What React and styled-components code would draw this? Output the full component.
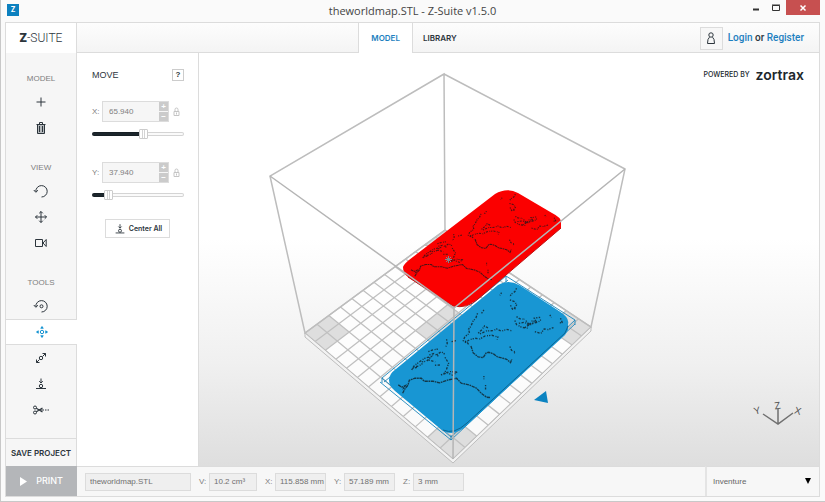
import React, { useState } from 'react';
import styled, { createGlobalStyle } from 'styled-components';

const line = '#dcdcdc';
const ink = '#2c353c';
const muted = '#808080';
const blue = '#1d7fc0';
const sans = '"Liberation Sans", Arial, sans-serif';
const display = 'Inter, "Liberation Sans", sans-serif';

const GlobalStyle = createGlobalStyle`
  * {
    box-sizing: border-box;
  }
  body {
    margin: 0;
    background: #fafafa;
    color: ${ink};
    font: 8px/12px ${sans};
  }
  button, input, select {
    font: inherit;
    color: inherit;
    margin: 0;
  }
  button {
    padding: 0;
    border: none;
    background: none;
    cursor: pointer;
  }
  a {
    color: inherit;
    text-decoration: none;
  }
`;

const Window = styled.div`
  display: flex;
  flex-direction: column;
  min-height: 100vh;
  padding: 0 5px 4px 4px;
  border-left: 1px solid #c8c8c8;
  border-bottom: 1px solid #c8c8c8;
`;

const TitleBar = styled.div`
  display: grid;
  grid-template-columns: 1fr auto 1fr;
  height: 22px;
`;

const AppIcon = styled.div`
  width: 12px;
  height: 12px;
  margin: 4px 0 0 2px;
  background: #0b80bf;
  color: white;
  font: bold 7px/12px ${display};
  text-align: center;
`;

const WindowTitle = styled.h1`
  margin: 0;
  color: #444;
  font: 11px/22px "Open Sans", sans-serif;
`;

const WindowButtons = styled.div`
  display: flex;
  justify-content: flex-end;
  align-items: flex-start;
`;

const WindowButton = styled.button`
  display: flex;
  align-items: center;
  justify-content: center;
  width: ${({ $close }) => ($close ? 34 : 20)}px;
  height: 15px;
  background: ${({ $close }) => ($close ? '#c75050' : 'none')};
  color: ${({ $close }) => ($close ? 'white' : '#333')};
`;

const Frame = styled.div`
  display: flex;
  flex-direction: column;
  flex: 1;
  border: 1px solid ${line};
`;

const Header = styled.header`
  display: grid;
  grid-template-columns: 1fr auto 1fr;
  height: 30px;
  border-bottom: 1px solid ${line};
  background: linear-gradient(#fdfdfd, #f4f4f4);
`;

const Logo = styled.div`
  width: 71px;
  border-right: 1px solid ${line};
  background: white;
  font: 300 12px/30px Roboto, sans-serif;
  text-align: center;
  b {
    font-weight: 900;
  }
`;

const Tabs = styled.nav`
  display: flex;
`;

const Tab = styled.a`
  height: ${({ $active }) => ($active ? 30 : 29)}px;
  padding: 0 ${({ $active }) => ($active ? 12 : 10)}px;
  border: solid ${line};
  border-width: 0 ${({ $active }) => ($active ? '1px' : 0)};
  background: ${({ $active }) => ($active ? 'white' : 'none')};
  color: ${({ $active }) => ($active ? blue : ink)};
  font: 600 8px/30px ${display};
`;

const Account = styled.div`
  display: flex;
  align-items: center;
  justify-content: flex-end;
  gap: 5px;
  padding-right: 15px;
  font: 500 10px/22px Roboto, sans-serif;
  a {
    color: ${blue};
  }
`;

const Avatar = styled.button`
  display: flex;
  align-items: center;
  justify-content: center;
  width: 23px;
  height: 23px;
  border: 1px solid ${line};
  background: #f7f7f7;
`;

const Body = styled.div`
  display: flex;
  flex: 1;
`;

const Sidebar = styled.aside`
  display: flex;
  flex-direction: column;
  width: 71px;
  padding-top: 14px;
  border-right: 1px solid ${line};
  background: #f6f6f6;
`;

const ToolGroup = styled.section`
  margin-bottom: 15px;
`;

const GroupLabel = styled.h2`
  height: 22px;
  margin: 0;
  color: ${muted};
  font: 8px/24px ${sans};
  text-align: center;
`;

const ToolButton = styled.button`
  display: flex;
  align-items: center;
  justify-content: center;
  width: ${({ $active }) => ($active ? 71 : 70)}px;
  height: 26px;
  border: solid ${line};
  border-width: ${({ $active }) => ($active ? '1px 0' : 0)};
  background: ${({ $active }) => ($active ? 'white' : 'none')};
  color: ${({ $active }) => ($active ? '#1794d2' : ink)};
`;

const SaveButton = styled.button`
  height: 28px;
  margin-top: auto;
  border-top: 1px solid ${line};
  font: 600 8px/26px ${display};
`;

const Panel = styled.section`
  width: 122px;
  padding: 15px 14px 0 15px;
  border-right: 1px solid ${line};
  background: white;
`;

const PanelHead = styled.div`
  display: flex;
  align-items: center;
  justify-content: space-between;
  margin-bottom: 19px;
  h2 {
    margin: 0;
    font: 9px/14px ${sans};
  }
`;

const HelpButton = styled.button`
  width: 12px;
  height: 12px;
  border: 1px solid #ccc;
  font: bold 8px/10px ${sans};
`;

const Axis = styled.div`
  height: 61px;
`;

const AxisRow = styled.div`
  display: flex;
  align-items: center;
  color: ${muted};
  label {
    width: 10px;
  }
`;

const NumberBox = styled.div`
  display: flex;
  width: 67px;
  height: 21px;
  margin-right: 4px;
  border: 1px solid ${line};
  background: #f6f6f6;
  input {
    flex: 1;
    min-width: 0;
    padding: 1px 0 0 6px;
    border: none;
    background: none;
  }
`;

const Steps = styled.div`
  display: flex;
  flex-direction: column;
  gap: 1px;
  button {
    flex: 1;
    width: 9px;
    background: #cbcbcb;
    color: white;
    font: bold 8px/8px ${sans};
  }
`;

const Slider = styled.input`
  display: block;
  appearance: none;
  width: 92px;
  height: 10px;
  margin: 7px 0 0;
  background: none;
  &::-webkit-slider-runnable-track {
    height: 4px;
    border: 1px solid rgba(0, 0, 0, 0.15);
    border-radius: 2px;
    background: linear-gradient(90deg, #1c262c ${({ value }) => value}%, #fafafa 0) border-box;
  }
  &::-webkit-slider-thumb {
    appearance: none;
    width: 9px;
    height: 10px;
    margin-top: -4px;
    border: 1px solid #ccc;
    border-radius: 1px;
    background: linear-gradient(90deg, white 2px, #d4d4d4 2px 3px, white 3px 4px, #d4d4d4 4px 5px, white 5px) center;
  }
`;

const CenterButton = styled.button`
  display: flex;
  align-items: center;
  justify-content: center;
  gap: 2px;
  width: 65px;
  height: 19px;
  margin: -4px 0 0 13px;
  border: 1px solid ${line};
  font: 600 7px/16px ${display};
`;

const Viewport = styled.main`
  position: relative;
  flex: 1;
  min-width: 0;
  background: linear-gradient(white 45%, #f0f0f0 75%, #dedede);
  > svg {
    display: block;
    width: 100%;
    height: 100%;
  }
`;

const Powered = styled.div`
  position: absolute;
  top: 11px;
  right: 15px;
  display: flex;
  align-items: center;
  gap: 6px;
  color: #20272c;
  font: 500 7px/22px ${display};
  strong {
    font: 600 14px/18px ${display};
  }
`;

const Footer = styled.footer`
  display: flex;
  height: 30px;
  background: #f7f7f7;
`;

const PrintButton = styled.button`
  display: flex;
  align-items: center;
  justify-content: center;
  gap: 9px;
  width: 71px;
  background: #b4b6b9;
  color: white;
  font: 500 9px/30px ${display};
`;

const Stats = styled.div`
  display: flex;
  align-items: center;
  flex: 1;
  gap: 8px;
  padding-left: 8px;
  border-top: 1px solid ${line};
  color: ${muted};
`;

const Stat = styled.label`
  display: flex;
  align-items: center;
  span {
    width: 10px;
  }
  input {
    width: ${({ $size }) => $size}px;
    height: 18px;
    padding: 0 0 0 4px;
    border: 1px solid ${line};
    background: #efefef;
    color: #707070;
  }
`;

const Material = styled.div`
  position: relative;
  width: 114px;
  border-top: 1px solid ${line};
  border-left: 2px solid #e4e4e4;
  select {
    appearance: none;
    width: 100%;
    height: 100%;
    padding: 0 6px;
    border: none;
    background: none;
    color: #666;
  }
  svg {
    position: absolute;
    top: 11px;
    right: 8px;
    pointer-events: none;
  }
`;

const Icon = ({ children, size = 16, width = 1 }) => (
  <svg
    width={size}
    height={size}
    viewBox="0 0 16 16"
    fill="none"
    stroke="currentColor"
    strokeWidth={width}
    aria-hidden="true"
  >
    {children}
  </svg>
);

const icons = {
  add: <path d="M8 3.500v9M3.500 8h9" />,
  remove: (
    <>
      <path d="M3.500 4.500h9M6.500 4V2.500h3V4" />
      <path d="M4.500 5v8.500h7V5" fill="#b4b8bb" />
      <path d="M6.500 6v6M9.500 6v6" />
    </>
  ),
  rotate: <path d="M2.800 8.500A5.700 5.700 0 1 1 8.500 14M.8 7l2 2.300L5 7.200" />,
  pan: <path d="M8 2.500v11M2.500 8h11M6.200 4.300L8 2.500l1.800 1.800M6.200 11.700L8 13.500l1.800-1.800M4.300 6.200L2.500 8l1.800 1.800M11.700 6.200L13.500 8l-1.800 1.800" />,
  camera: <path d="M2.500 4.500h7v7h-7zM10 8l3.200-3.500v7z" />,
  turn: (
    <>
      <path d="M2.800 8.500A5.700 5.700 0 1 1 8.500 14M.8 7l2 2.300L5 7.200" />
      <circle cx="8.500" cy="8.300" r="1.500" />
    </>
  ),
  move: (
    <>
      <circle cx="8" cy="8" r="1.700" />
      <path d="M8 2.500V5M8 11v2.500M2.500 8H5M11 8h2.500" />
      <path d="M6 4.500L8 2.200l2 2.300zM6 11.500l2 2.300 2-2.300zM4.500 6L2.200 8l2.300 2zM11.500 6l2.300 2-2.300 2z" fill="currentColor" stroke="none" />
    </>
  ),
  scale: (
    <>
      <circle cx="8" cy="8" r="1.700" />
      <path d="M9.500 6.500L12.500 3.500M9.500 3.500h3v3M6.500 9.500L3.500 12.500M3.500 9.500v3h3" />
    </>
  ),
  drop: (
    <>
      <path d="M3 12.500h10M8 2.500V7M6.200 5.200L8 7l1.800-1.800" />
      <circle cx="8" cy="10" r="1.700" />
    </>
  ),
  cut: (
    <>
      <circle cx="2" cy="5.500" r="1.500" />
      <circle cx="2" cy="10.500" r="1.500" />
      <path d="M3.300 6.200L9.500 10M3.300 9.800L9.500 6" strokeWidth="1.300" />
      <path d="M7 8h9" strokeDasharray="4 1 1.500 1" />
    </>
  ),
};

const LockIcon = () => (
  <svg width="8" height="10" viewBox="0 0 8 10" fill="none" stroke="#c4c4c4" aria-hidden="true">
    <path d="M1 4.500h5v4h-5zM2 4V2.500a1.500 1.500 0 0 1 3 0V4M3.500 5.500v2" />
  </svg>
);

// corners of the build plate, as seen by the camera
const plate = { left: [305, 333], back: [445, 230], right: [591, 327], front: [453, 459] };
const cells = 13;

// projects plate coordinates (0..1, 0..1) on the screen
const project = (u, v) => {
  const [x0, y0] = plate.left;
  const [x1, y1] = plate.back;
  const [x2, y2] = plate.right;
  const [x3, y3] = plate.front;
  const dx1 = x1 - x2;
  const dx2 = x3 - x2;
  const sx = x0 - x1 + x2 - x3;
  const dy1 = y1 - y2;
  const dy2 = y3 - y2;
  const sy = y0 - y1 + y2 - y3;
  const det = dx1 * dy2 - dx2 * dy1;
  const g = (sx * dy2 - dx2 * sy) / det;
  const h = (dx1 * sy - sx * dy1) / det;
  const w = g * u + h * v + 1;
  return [
    ((x1 - x0 + g * x1) * u + (x3 - x0 + h * x3) * v + x0) / w,
    ((y1 - y0 + g * y1) * u + (y3 - y0 + h * y3) * v + y0) / w,
  ];
};

const block = (u, v, n) =>
  [[u, v], [u + n, v], [u + n, v + n], [u, v + n]]
    .map(([a, b]) => project(a / cells, b / cells).join(','))
    .join(' ');

const gridPath = Array.from({ length: cells + 1 }, (_, i) => {
  const t = i / cells;
  return `M${project(t, 0)}L${project(t, 1)}M${project(0, t)}L${project(1, t)}`;
}).join('');

const Coastline = ({ transform }) => (
  <g transform={transform} fill="none" stroke="#10181c" strokeOpacity="0.75">
    <g strokeWidth="4" strokeDasharray="4 4 7 5 3 3">
      <path d="M440 55l-5 10-10 7-6 9M395 68l-5 8M420 90l15 5 5 10-8 13M422 106l6 12 10-2" />
      <path d="M323 130l-5 14-9 10-6 15-7 9 3 12-14 10-5 12 11 4 8 12M342 120l-7 10" />
      <path d="M325 190l10-10 9-12 12 7M330 192l20-9 20-1 10-5 15 7 15-6 16 5" />
      <path d="M285 218l15-9 16-4 14 2 16-9 20-2 18 5-2 8" />
      <path d="M435 152l5 12 15 8 20 3M440 140l9 6 16 2M447 160l18-3 12 8 10-12 12 2-6-10 18-3M465 173l20-13 20-3 8-8M468 152l12 14 14-8" />
      <path d="M495 185l18 6 10-14 12 2 16-6M540 135l5 7M572 145l6 14M570 158l8 2" />
      <path d="M420 230l5 11 11 5-3 4M342 318v10M347 345v14" />
      <path d="M125 300l9-14 16-11 14-10 20-5-14 14-15 2M130 290l15-1 16-10M175 245l14-5 17-3M178 255l14-4 14 8M176 270l20 6M127 296l14-4M200 255l14-10 12 9M195 286l20-1M230 208l2 12-5 13M245 215l13-3" />
      <path d="M225 262l11 18-6 18-7 12 18-5 22 2M213 315l20-6 17 8 14-14" />
    </g>
    <g strokeWidth="4" strokeDasharray="10 2 5 2">
      <path d="M303 228l7 21 15 12 15 2 9-14 8-2 14 5 12 9 13 3 14 4 12 10 4-10" />
      <path d="M98 370l8-15 8-9 4-15 17-6 19 0 9 9 26 0 20 5 26-9 25-5 14 15 24 5 22 10 14 15 16 12 12 1" />
      <path d="M85 345l10 7 11-5-8 12" />
    </g>
  </g>
);

const Scene = () => (
  <svg viewBox="199 53 620 413" role="img" aria-label="Build volume with the model">
    <polygon points={block(0, 0, cells)} fill="white" fillOpacity="0.8" />
    <g fill="#dedede">
      <polygon points={block(0, 0, 2)} />
      <polygon points={block(cells - 2, 0, 2)} />
      <polygon points={block(cells - 2, cells - 2, 2)} />
      <polygon points={block(0, cells - 2, 2)} />
      <polygon points={block(5, 5, 3)} />
    </g>
    <path d={gridPath} fill="none" stroke="#c0c0c0" strokeWidth="1.300" />
    <path d="M305 333l148 126 138-132v4L453 463 305 337z" fill="#f2f2f2" stroke="#bdbdbd" />
    <path
      d="M444 74L270 176l35 157L445 230zM444 74l181 95-34 158-146-97"
      fill="none"
      stroke="#bdbdbd"
      strokeWidth="1.500"
    />

    <path d="M382 378L506 276l69 44-124 117zM384 382L508 280M380 382l71 58 124-116M382 378v5M506 276v6M575 320v5M451 435v5" fill="none" stroke="#1b86bb" strokeWidth="0.900" />
    <path
      d="M498 285Q508 279 519 285L559 311Q570 318 568 324V330L565 335 467 425Q455 437 443 431L395 391Q389 386 389 380 389 374 396 369Z"
      fill="#1896d3"
    />
    <path d="M568 326l-3 7-98 90q-13 12-24 7" fill="none" stroke="#0d6592" />
    <Coastline transform="translate(370 270) scale(0.333)" />

    <path
      d="M495 194Q507 187 518 193L552 213Q562 218 561 223V228L478 299Q465 309 453 306L408 277Q403 273 403 267 404 264 409 260Z"
      fill="#fb0000"
    />
    <path d="M561 228l-83 71q-11 10-25 7l-45-29" fill="none" stroke="#c01010" />
    <Coastline transform="translate(386 180) scale(0.294 0.260)" />
    <path d="M446 257l5 5M451 257l-5 5M448.500 256v7M445 259.500h7" stroke="#7d8a90" />

    <path d="M270 176l184 132 171-139M454 308l-1 151" fill="none" stroke="#b5b5b5" strokeWidth="1.500" />
    <path d="M534 400l12-9 2 12z" fill="#0b83c1" />

    <g fill="none" stroke="#707070" strokeWidth="1.500">
      <path d="M763 414l15 10 15-11M778 424v-15" />
    </g>
    <g fill="#555" fontFamily="Liberation Sans, sans-serif" fontSize="10" textAnchor="middle">
      <text transform="translate(758 414) rotate(-15)">Y</text>
      <text transform="translate(778 409) rotate(-10)">Z</text>
      <text transform="translate(797 414) rotate(15)">X</text>
    </g>
  </svg>
);

const groups = [
  { title: 'MODEL', tools: ['add', 'remove'] },
  { title: 'VIEW', tools: ['rotate', 'pan', 'camera'] },
  { title: 'TOOLS', tools: ['turn', 'move', 'scale', 'drop', 'cut'] },
];

const stats = [
  { label: 'V:', value: '10.2 cm³', size: 48 },
  { label: 'X:', value: '115.858 mm', size: 51 },
  { label: 'Y:', value: '57.189 mm', size: 51 },
  { label: 'Z:', value: '3 mm', size: 51 },
];

const AxisControl = ({ name, value, start }) => {
  const [position, setPosition] = useState(start);
  const id = `position_${name}`;
  return (
    <Axis>
      <AxisRow>
        <label htmlFor={id}>{name}:</label>
        <NumberBox>
          <input id={id} defaultValue={value} />
          <Steps>
            <button type="button" aria-label={`Increase ${name}`}>+</button>
            <button type="button" aria-label={`Decrease ${name}`}>−</button>
          </Steps>
        </NumberBox>
        <LockIcon />
      </AxisRow>
      <Slider
        type="range"
        aria-label={`${name} position`}
        value={position}
        onChange={e => setPosition(Number(e.target.value))}
      />
    </Axis>
  );
};

const App = () => {
  const [tool, setTool] = useState('move');

  return (
    <Window>
      <GlobalStyle />
      <TitleBar>
        <AppIcon>Z</AppIcon>
        <WindowTitle>theworldmap.STL - Z-Suite v1.5.0</WindowTitle>
        <WindowButtons>
          <WindowButton type="button" aria-label="Minimize">
            <Icon><path d="M5 9.500h6" strokeWidth="2" /></Icon>
          </WindowButton>
          <WindowButton type="button" aria-label="Maximize">
            <Icon><path d="M4.500 5.500h7v5h-7zM4 5h8" /></Icon>
          </WindowButton>
          <WindowButton type="button" aria-label="Close" $close>
            <Icon><path d="M5.500 5.500l5 5M10.500 5.500l-5 5" strokeWidth="1.500" /></Icon>
          </WindowButton>
        </WindowButtons>
      </TitleBar>
      <Frame>
        <Header>
          <Logo><b>Z</b>-SUITE</Logo>
          <Tabs>
            <Tab href="#model" $active>MODEL</Tab>
            <Tab href="#library">LIBRARY</Tab>
          </Tabs>
          <Account>
            <Avatar type="button" aria-label="Account">
              <Icon>
                <circle cx="8" cy="5" r="2.200" />
                <path d="M6.500 7.200Q4.500 8.500 4.500 13.500h7Q11.500 8.500 9.500 7.200" />
              </Icon>
            </Avatar>
            <span><a href="#login">Login</a> or <a href="#register">Register</a></span>
          </Account>
        </Header>
        <Body>
          <Sidebar>
            {groups.map(({ title, tools }) => (
              <ToolGroup key={title}>
                <GroupLabel>{title}</GroupLabel>
                {tools.map(name => (
                  <ToolButton
                    key={name}
                    type="button"
                    aria-label={name}
                    $active={tool === name}
                    onClick={() => setTool(name)}
                  >
                    <Icon>{icons[name]}</Icon>
                  </ToolButton>
                ))}
              </ToolGroup>
            ))}
            <SaveButton type="button">SAVE PROJECT</SaveButton>
          </Sidebar>
          <Panel>
            <PanelHead>
              <h2>MOVE</h2>
              <HelpButton type="button">?</HelpButton>
            </PanelHead>
            <AxisControl name="X" value="65.940" start={57} />
            <AxisControl name="Y" value="37.940" start={13} />
            <CenterButton type="button">
              <Icon size={14}>{icons.drop}</Icon>
              Center All
            </CenterButton>
          </Panel>
          <Viewport>
            <Scene />
            <Powered>POWERED BY <strong>zortrax</strong></Powered>
          </Viewport>
        </Body>
        <Footer>
          <PrintButton type="button">
            <svg width="7" height="9" viewBox="0 0 7 9" aria-hidden="true">
              <path d="M0 0l7 4.500L0 9z" fill="white" />
            </svg>
            PRINT
          </PrintButton>
          <Stats>
            <Stat $size={106}>
              <input aria-label="File name" readOnly value="theworldmap.STL" />
            </Stat>
            {stats.map(({ label, value, size }) => (
              <Stat key={label} $size={size}>
                <span>{label}</span>
                <input readOnly value={value} />
              </Stat>
            ))}
          </Stats>
          <Material>
            <select aria-label="Material">
              <option>Inventure</option>
            </select>
            <svg width="6" height="6" viewBox="0 0 6 6" aria-hidden="true">
              <path d="M0 0h6L3 6z" />
            </svg>
          </Material>
        </Footer>
      </Frame>
    </Window>
  );
};

export default App;
